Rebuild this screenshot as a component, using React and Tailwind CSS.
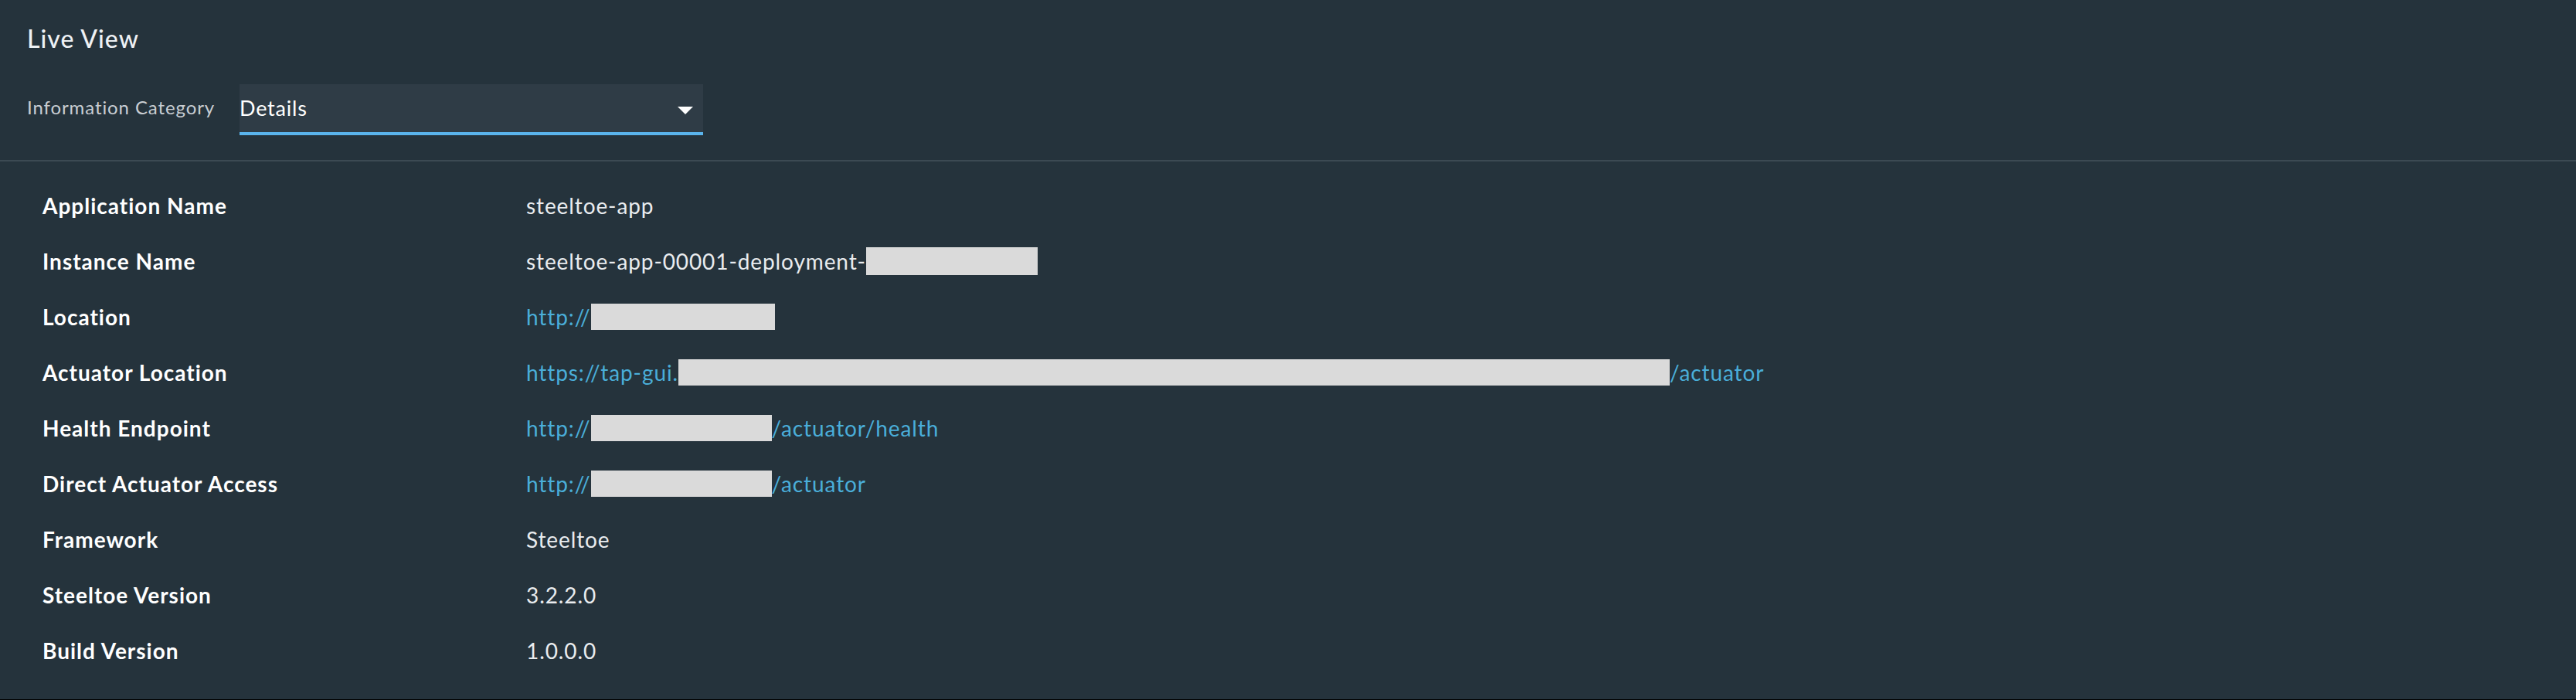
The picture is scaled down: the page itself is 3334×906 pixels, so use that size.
import { useState } from "react";

const rows = [
  { label: "Application Name", value: [{ t: "steeltoe-app" }] },
  { label: "Instance Name", value: [{ t: "steeltoe-app-00001-deployment-" }, { mask: "w-[222px] h-[36px]" }] },
  { label: "Location", link: true, value: [{ t: "http://" }, { mask: "w-[238px] h-[34px]" }] },
  { label: "Actuator Location", link: true, value: [{ t: "https://tap-gui." }, { mask: "w-[1283px] h-[34px]" }, { t: "/actuator" }] },
  { label: "Health Endpoint", link: true, value: [{ t: "http://" }, { mask: "w-[234px] h-[34px]" }, { t: "/actuator/health" }] },
  { label: "Direct Actuator Access", link: true, value: [{ t: "http://" }, { mask: "w-[234px] h-[34px]" }, { t: "/actuator" }] },
  { label: "Framework", value: [{ t: "Steeltoe" }] },
  { label: "Steeltoe Version", value: [{ t: "3.2.2.0" }] },
  { label: "Build Version", value: [{ t: "1.0.0.0" }] },
];

const App = () => {
  const [category] = useState("Details");

  return (
    <div className="w-full h-[906px] bg-[#25333c] border-b border-black font-['Lato',sans-serif] text-[#e9ecef] overflow-hidden">
      {/* Header */}
      <div className="px-[35px] pt-[30px]">
        <h2 className="text-[32px] leading-[40px] font-medium tracking-[1px] text-[#eef1f4]">Live View</h2>
        <div className="flex items-center mt-[39px]">
          <span className="text-[24px] tracking-[0.9px] text-[#c9ced3] w-[275px] mb-[6px]">Information Category</span>
          <div className="relative w-[600px] h-[66px] bg-[#2f3c46] border-b-4 border-[#5ab4ec] flex items-center">
            <span className="text-[27px] tracking-[0.8px] text-white">{category}</span>
            <span className="absolute right-[13px] top-[29px] w-0 h-0 border-l-[10px] border-r-[10px] border-t-[10px] border-l-transparent border-r-transparent border-t-white" />
          </div>
        </div>
      </div>

      {/* Divider */}
      <div className="mt-[32px] h-[2px] bg-[#3c4a53]" />

      {/* Details table */}
      <div className="pt-[21px] pl-[55px]">
        {rows.map((row) => (
          <div className="flex items-center h-[72px] text-[28px]" key={row.label}>
            <div className="w-[626px] font-bold tracking-[1px] text-white">{row.label}</div>
            <div className={`flex items-center tracking-[0.9px] ${row.link ? "text-[#4aaed9]" : "text-[#e9ecef]"}`}>
              {row.value.map((part, i) =>
                part.mask ? (
                  <span key={i} className={`inline-block bg-[#dadada] ${part.mask}`} />
                ) : (
                  <span key={i}>{part.t}</span>
                )
              )}
            </div>
          </div>
        ))}
      </div>
    </div>
  );
};

export default App;
